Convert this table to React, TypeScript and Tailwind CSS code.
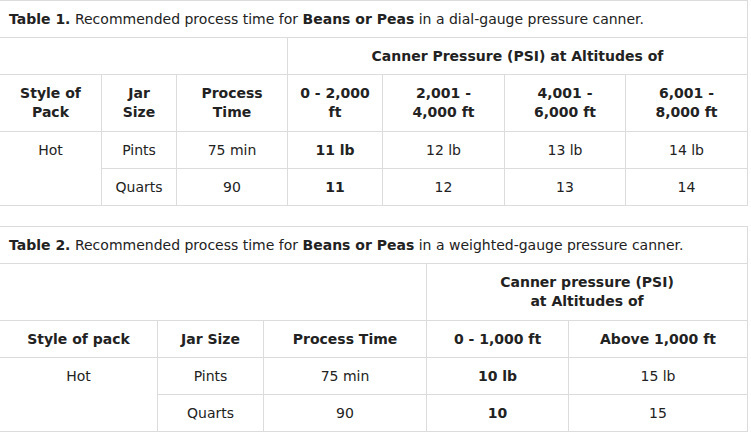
import React from "react";

const font = { fontFamily: '"DejaVu Sans", Verdana, sans-serif' };

function Cell({
    children,
    className = "",
}: {
    children?: React.ReactNode;
    className?: string;
}) {
    return (
        <div className={"bg-white flex items-center justify-center text-center leading-[19px] " + className}>
            {children}
        </div>
    );
}

function TableOne() {
    return (
        <div className="grid w-[749px] -ml-px bg-[#dcdcdc] p-px gap-px grid-cols-[101px_74px_110px_94px_121px_120px_121px] grid-rows-[36px_36px_56px_36px_36px]">
            <div className="col-span-7 bg-white flex items-center pl-[9px]">
                <p>
                    <b>Table 1.</b> Recommended process time for <b>Beans or Peas</b> in a dial-gauge pressure canner.
                </p>
            </div>
            <Cell className="col-span-3" />
            <Cell className="col-span-4 font-bold">Canner Pressure (PSI) at Altitudes of</Cell>
            <Cell className="font-bold">Style of<br />Pack</Cell>
            <Cell className="font-bold">Jar<br />Size</Cell>
            <Cell className="font-bold">Process<br />Time</Cell>
            <Cell className="font-bold">0 - 2,000<br />ft</Cell>
            <Cell className="font-bold">2,001 -<br />4,000 ft</Cell>
            <Cell className="font-bold">4,001 -<br />6,000 ft</Cell>
            <Cell className="font-bold">6,001 -<br />8,000 ft</Cell>
            <div className="row-span-2 bg-white">
                <div className="h-[36px] flex items-center justify-center">Hot</div>
            </div>
            <Cell>Pints</Cell>
            <Cell>75 min</Cell>
            <Cell className="font-bold">11 lb</Cell>
            <Cell>12 lb</Cell>
            <Cell>13 lb</Cell>
            <Cell>14 lb</Cell>
            <Cell>Quarts</Cell>
            <Cell>90</Cell>
            <Cell className="font-bold">11</Cell>
            <Cell>12</Cell>
            <Cell>13</Cell>
            <Cell>14</Cell>
        </div>
    );
}

function TableTwo() {
    return (
        <div className="grid w-[749px] -ml-px bg-[#dcdcdc] p-px gap-px grid-cols-[157px_105px_162px_141px_178px] grid-rows-[36px_56px_36px_36px_36px]">
            <div className="col-span-5 bg-white flex items-center pl-[9px]">
                <p>
                    <b>Table 2.</b> Recommended process time for <b>Beans or Peas</b> in a weighted-gauge pressure canner.
                </p>
            </div>
            <Cell className="col-span-3" />
            <Cell className="col-span-2 font-bold">Canner pressure (PSI)<br />at Altitudes of</Cell>
            <Cell className="font-bold">Style of pack</Cell>
            <Cell className="font-bold">Jar Size</Cell>
            <Cell className="font-bold">Process Time</Cell>
            <Cell className="font-bold">0 - 1,000 ft</Cell>
            <Cell className="font-bold">Above 1,000 ft</Cell>
            <div className="row-span-2 bg-white">
                <div className="h-[36px] flex items-center justify-center">Hot</div>
            </div>
            <Cell>Pints</Cell>
            <Cell>75 min</Cell>
            <Cell className="font-bold">10 lb</Cell>
            <Cell>15 lb</Cell>
            <Cell>Quarts</Cell>
            <Cell>90</Cell>
            <Cell className="font-bold">10</Cell>
            <Cell>15</Cell>
        </div>
    );
}

export default function App() {
    return (
        <div className="w-[751px] h-[432px] overflow-hidden bg-white text-[14px] text-[#222]" style={font}>
            <TableOne />
            <div className="h-[20px]" />
            <TableTwo />
        </div>
    );
}
